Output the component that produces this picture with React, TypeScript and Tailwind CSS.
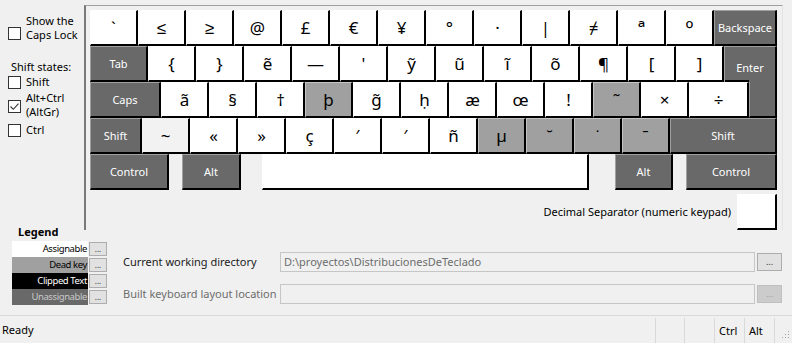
import React from "react";

type KT = "w" | "d" | "u" | "l";
type K = { c: string; w: string; t?: KT; lab?: boolean; ml?: string; big?: boolean };

const bgFor: Record<KT, string> = {
  w: "bg-white border-t-white border-l-white text-black",
  l: "bg-[#f2f2f2] border-t-[#f2f2f2] border-l-[#f2f2f2] text-black",
  d: "bg-[#a0a0a0] border-t-[#c4c4c4] border-l-[#c4c4c4] text-black",
  u: "bg-[#696969] border-t-[#a0a0a0] border-l-[#a0a0a0] text-white",
};

function Key({ k }: { k: K }) {
  const t = k.t ?? "w";
  return (
    <div
      className={`h-[36px] shrink-0 flex items-center justify-center border-t border-l border-r-2 border-b-2 border-r-black border-b-black ${bgFor[t]} ${k.w} ${k.ml ?? ""}`}
    >
      {k.lab ? (
        <span className="text-[11px] leading-[14px]">{k.c}</span>
      ) : k.big ? (
        <span className="text-[21px] leading-[22px]">{k.c}</span>
      ) : (
        <span className="text-[17px] leading-[20px]">{k.c}</span>
      )}
    </div>
  );
}

const W = "w-[48px]";

const row1: K[] = [
  { c: "`", w: W },
  { c: "≤", w: W },
  { c: "≥", w: W },
  { c: "@", w: W },
  { c: "£", w: W },
  { c: "€", w: W },
  { c: "¥", w: W },
  { c: "°", w: W },
  { c: "·", w: W },
  { c: "|", w: W },
  { c: "≠", w: W },
  { c: "ª", w: W, big: true },
  { c: "º", w: W, big: true },
  { c: "Backspace", w: "w-[63px]", t: "u", lab: true },
];

const row2: K[] = [
  { c: "Tab", w: "w-[58px]", t: "u", lab: true },
  { c: "{", w: W },
  { c: "}", w: W },
  { c: "ẽ", w: W },
  { c: "—", w: W },
  { c: "'", w: W },
  { c: "ỹ", w: W },
  { c: "ũ", w: W },
  { c: "ĩ", w: W },
  { c: "õ", w: W },
  { c: "¶", w: W },
  { c: "[", w: W },
  { c: "]", w: W },
];

const row3: K[] = [
  { c: "Caps", w: "w-[71px]", t: "u", lab: true },
  { c: "ã", w: W },
  { c: "§", w: W },
  { c: "†", w: W },
  { c: "þ", w: W, t: "d" },
  { c: "g̃", w: W },
  { c: "ḥ", w: W },
  { c: "æ", w: W },
  { c: "œ", w: W },
  { c: "!", w: W },
  { c: "˜", w: W, t: "d" },
  { c: "×", w: W },
  { c: "÷", w: "w-[60px]" },
];

const row4: K[] = [
  { c: "Shift", w: "w-[52px]", t: "u", lab: true },
  { c: "~", w: W, t: "l" },
  { c: "«", w: W },
  { c: "»", w: W },
  { c: "ç", w: W },
  { c: "′", w: W },
  { c: "′", w: W },
  { c: "ñ", w: W },
  { c: "µ", w: W, t: "d" },
  { c: "˘", w: W, t: "d" },
  { c: "˙", w: W, t: "d" },
  { c: "ˉ", w: W, t: "d" },
  { c: "Shift", w: "w-[107px]", t: "u", lab: true },
];

const row5: K[] = [
  { c: "Control", w: "w-[79px]", t: "u", lab: true },
  { c: "Alt", w: "w-[59px]", t: "u", lab: true, ml: "ml-[13px]" },
  { c: "", w: "w-[327px]", ml: "ml-[21px]" },
  { c: "Alt", w: "w-[58px]", t: "u", lab: true, ml: "ml-[26px]" },
  { c: "Control", w: "w-[91px]", t: "u", lab: true, ml: "ml-[13px]" },
];

function Check({ checked }: { checked?: boolean }) {
  return (
    <div className="w-[13px] h-[13px] shrink-0 border border-[#333333] bg-white flex items-center justify-center">
      {checked && (
        <svg width="11" height="11" viewBox="0 0 11 11">
          <path d="M1.5 5.5 L4.3 8.3 L9.5 2.6" fill="none" stroke="#333333" strokeWidth="1.1" />
        </svg>
      )}
    </div>
  );
}

function Sidebar() {
  return (
    <div className="w-[84px] shrink-0 pl-[8px] flex flex-col text-[11px] leading-[14px] text-black">
      <div className="flex items-start mt-[14px]">
        <div className="mt-[13px]">
          <Check />
        </div>
        <div className="ml-[5px] flex flex-col">
          <span className="h-[14px]">Show the</span>
          <span className="h-[14px]">Caps Lock</span>
        </div>
      </div>
      <div className="mt-[18px] ml-[3px] h-[14px]">Shift states:</div>
      <div className="flex items-center mt-[1px] h-[14px]">
        <Check />
        <span className="ml-[5px]">Shift</span>
      </div>
      <div className="flex items-start mt-[2px]">
        <div className="mt-[9px]">
          <Check checked />
        </div>
        <div className="ml-[5px] flex flex-col">
          <span className="h-[14px]">Alt+Ctrl</span>
          <span className="h-[14px]">(AltGr)</span>
        </div>
      </div>
      <div className="flex items-center mt-[4px] h-[14px]">
        <Check />
        <span className="ml-[5px]">Ctrl</span>
      </div>
    </div>
  );
}

function Keyboard() {
  return (
    <div className="mt-[5px] w-[699px] h-[225px] border-t border-t-[#a0a0a0] border-l-2 border-l-[#7a7a7a] border-r border-r-[#e4e4e4] pt-[4px] pl-[4px]">
      <div className="w-[687px] flex flex-col">
        <div className="flex">
          {row1.map((k, i) => (
            <Key key={i} k={k} />
          ))}
        </div>
        <div className="flex">
          {row2.map((k, i) => (
            <Key key={i} k={k} />
          ))}
          <div className="w-[53px] h-[36px] shrink-0 bg-[#696969] border-t border-l border-[#a0a0a0] border-r-2 border-r-black flex flex-col">
            <div className="flex-1 flex items-center justify-center pt-[9px] text-white text-[11px] leading-[14px]">
              Enter
            </div>
            <div className="h-[2px] w-[24px] bg-black" />
          </div>
        </div>
        <div className="flex">
          {row3.map((k, i) => (
            <Key key={i} k={k} />
          ))}
          <div className="w-[28px] h-[36px] shrink-0 bg-[#696969] border-l border-l-[#a0a0a0] border-r-2 border-b-2 border-r-black border-b-black" />
        </div>
        <div className="flex">
          {row4.map((k, i) => (
            <Key key={i} k={k} />
          ))}
        </div>
        <div className="flex">
          {row5.map((k, i) => (
            <Key key={i} k={k} />
          ))}
        </div>
        <div className="flex items-center justify-end mt-[4px]">
          <span className="text-[11px] leading-[14px] text-black mr-[6px]">
            Decimal Separator (numeric keypad)
          </span>
          <Key k={{ c: "", w: "w-[40px]" }} />
        </div>
      </div>
    </div>
  );
}

function LegendRow({ label, cls }: { label: string; cls: string }) {
  return (
    <div className="flex items-center h-[16px]">
      <div className={`w-[76px] h-[16px] flex items-center justify-end pr-[1px] text-[9.5px] tracking-[-0.4px] leading-[12px] ${cls}`}>
        {label}
      </div>
      <div className="ml-[1px] w-[18px] h-[14px] bg-[#e1e1e1] border border-[#adadad] flex items-end justify-center text-[8px] leading-[10px] text-[#333] pb-[1px]">
        ...
      </div>
    </div>
  );
}

function Legend() {
  return (
    <div className="w-[123px] shrink-0 pl-[12px] flex flex-col">
      <div className="-mt-[6px] h-[17px] pl-[6px] text-[11px] leading-[15px] font-bold text-black">
        Legend
      </div>
      <LegendRow label="Assignable" cls="bg-white text-black" />
      <LegendRow label="Dead key" cls="bg-[#a0a0a0] text-black" />
      <LegendRow label="Clipped Text" cls="bg-black text-white" />
      <LegendRow label="Unassignable" cls="bg-[#696969] text-[#c8c8c8]" />
    </div>
  );
}

function Fields() {
  return (
    <div className="flex flex-col pt-[22px] text-[11px]">
      <div className="flex items-center h-[20px]">
        <div className="w-[157px] text-[#1a1a1a]">Current working directory</div>
        <div className="w-[475px] h-[20px] border border-[#c6c6c6] bg-[#f0f0f0] flex items-center pl-[3px] text-[#6d6d6d]">
          D:\proyectos\DistribucionesDeTeclado
        </div>
        <div className="ml-[2px] w-[25px] h-[18px] bg-[#e1e1e1] border border-[#adadad] flex items-end justify-center text-[9px] leading-[10px] pb-[3px] text-[#333]">
          ...
        </div>
      </div>
      <div className="flex items-center h-[20px] mt-[12px]">
        <div className="w-[157px] text-[#6d6d6d]">Built keyboard layout location</div>
        <div className="w-[475px] h-[20px] border border-[#c6c6c6] bg-[#f0f0f0]" />
        <div className="ml-[2px] w-[25px] h-[18px] bg-[#cccccc] border border-[#bfbfbf] flex items-end justify-center text-[9px] leading-[10px] pb-[3px] text-[#a0a0a0]">
          ...
        </div>
      </div>
    </div>
  );
}

function StatusBar() {
  return (
    <div className="h-[28px] border-t border-[#d9d9d9] flex text-[11px] leading-[14px] text-black">
      <div className="flex-1 flex items-center pl-[2px]">Ready</div>
      <div className="w-[29px] mt-[2px] border-l border-[#d9d9d9]" />
      <div className="w-[30px] mt-[2px] border-l border-[#d9d9d9]" />
      <div className="w-[30px] mt-[2px] border-l border-[#d9d9d9] flex items-center pl-[4px]">Ctrl</div>
      <div className="w-[30px] mt-[2px] border-l border-[#d9d9d9] flex items-center pl-[4px]">Alt</div>
      <div className="w-[18px] mt-[2px] border-l border-[#d9d9d9] flex items-end justify-end pr-[2px] pb-[2px]">
        <svg width="10" height="10" viewBox="0 0 10 10">
          <rect x="8" y="0" width="1" height="1" fill="#a0a0a0" />
          <rect x="5" y="3" width="1" height="1" fill="#a0a0a0" />
          <rect x="8" y="3" width="1" height="1" fill="#a0a0a0" />
          <rect x="2" y="6" width="1" height="1" fill="#a0a0a0" />
          <rect x="5" y="6" width="1" height="1" fill="#a0a0a0" />
          <rect x="8" y="6" width="1" height="1" fill="#a0a0a0" />
        </svg>
      </div>
    </div>
  );
}

export default function App() {
  return (
    <div className="w-[792px] h-[343px] bg-[#f0f0f0] flex flex-col overflow-hidden font-['Noto_Sans',sans-serif]">
      <div className="flex h-[230px] shrink-0">
        <Sidebar />
        <Keyboard />
      </div>
      <div className="flex h-[85px] shrink-0">
        <Legend />
        <Fields />
      </div>
      <StatusBar />
    </div>
  );
}
